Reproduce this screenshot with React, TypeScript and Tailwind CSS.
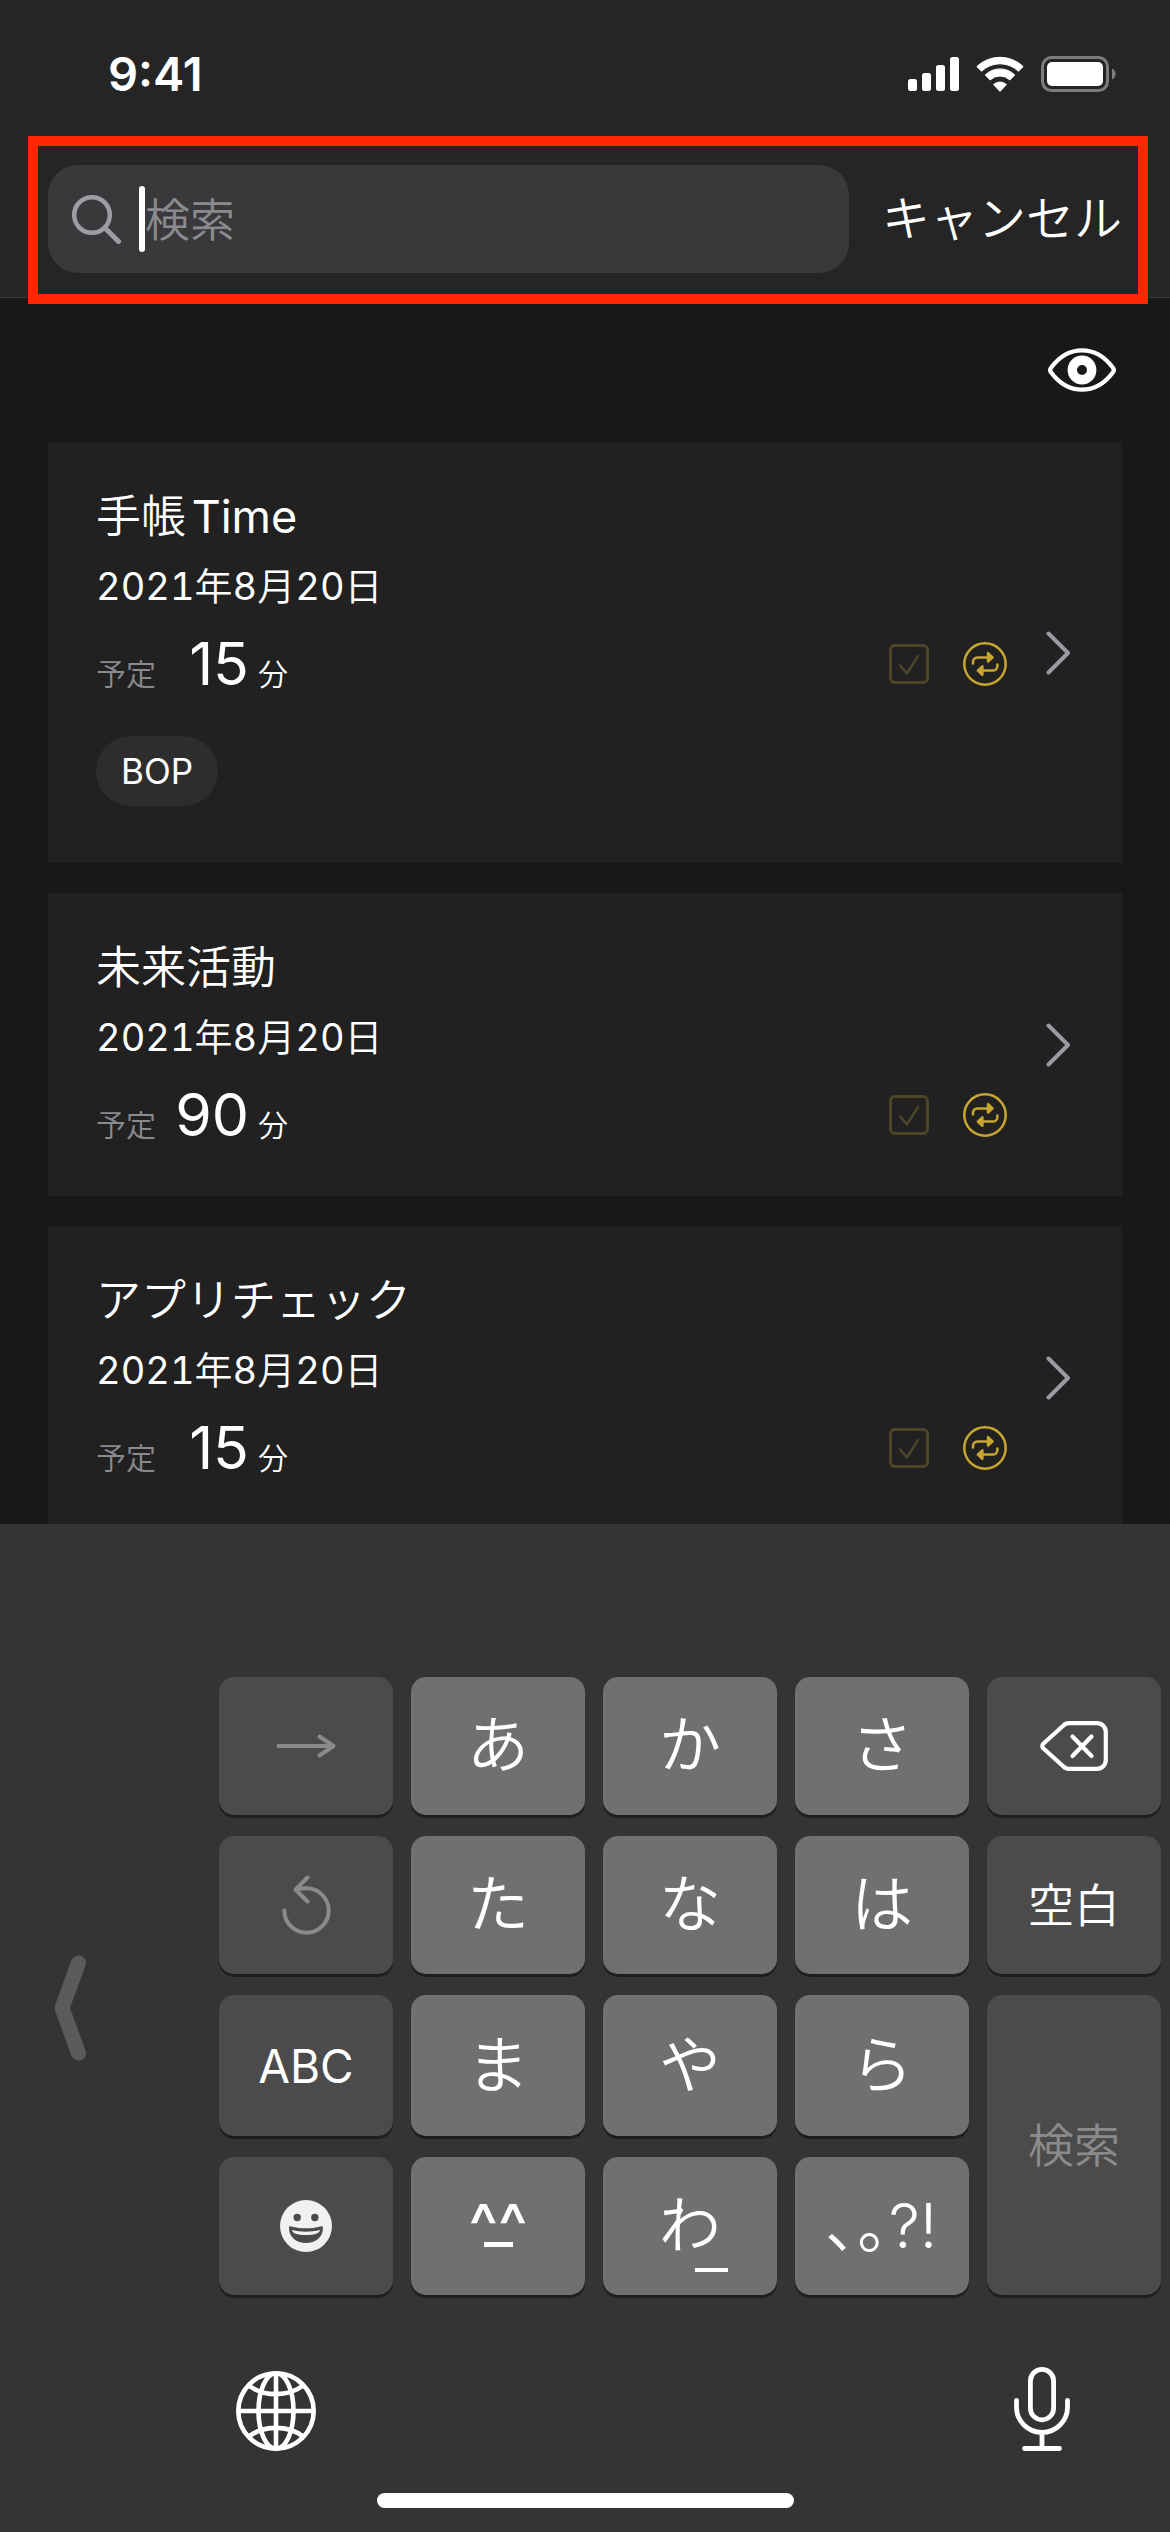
import { useState, type FC, type ReactNode } from 'react';
import clsx from 'clsx';

interface Task {
  id: number;
  title: string;
  date: string;
  minutes: number;
  tags: string[];
}

const TASKS: Task[] = [
  { id: 1, title: '手帳Time', date: '2021年8月20日', minutes: 15, tags: ['BOP'] },
  { id: 2, title: '未来活動', date: '2021年8月20日', minutes: 90, tags: [] },
  { id: 3, title: 'アプリチェック', date: '2021年8月20日', minutes: 15, tags: [] },
];

// Kana and kanji are set a little lighter than the latin runs beside them
const MixedText: FC<{ text: string }> = ({ text }) => (
  <>
    {text.split(/([\x20-\x7e]+)/).filter(Boolean).map((run, i) =>
      /^[\x20-\x7e]/.test(run) ? <span key={i} className="font-normal">{run}</span> : run,
    )}
  </>
);

const StatusBar: FC = () => (
  <div className="flex h-[136px] items-start justify-between pt-[46px] pr-[54px] pl-[108px]">
    <span className="text-[47px] leading-[56px] font-semibold">9:41</span>
    <div className="flex h-[56px] items-center gap-[17px]">
      <svg width="51" height="34" viewBox="0 0 51 34" fill="currentColor">
        <rect x="0" y="22" width="9" height="12" rx="2.5" />
        <rect x="14" y="16" width="9" height="18" rx="2.5" />
        <rect x="28" y="8" width="9" height="26" rx="2.5" />
        <rect x="42" y="0" width="9" height="34" rx="2.5" />
      </svg>
      <svg width="48" height="36" viewBox="0 0 48 36" fill="currentColor" stroke="currentColor" strokeWidth="1" strokeLinejoin="round">
        <path d="M.8 10.6A33.5 33.5 0 0 1 47.2 10.6L42.4 15.2A26.5 26.5 0 0 0 5.6 15.2Z" />
        <path d="M9.2 19A21 21 0 0 1 38.8 19L33.8 24A14 14 0 0 0 14.2 24Z" />
        <path d="M24 35.4L17.5 28.6A9.4 9.4 0 0 1 30.5 28.6Z" />
      </svg>
      <svg width="75" height="36" viewBox="0 0 75 36">
        <rect x="1.5" y="1.5" width="65" height="33" rx="9" fill="none" stroke="#7c7c7c" strokeWidth="3" />
        <rect x="6" y="6" width="56" height="24" rx="5" fill="#fff" />
        <path d="M71 12.500a6 6 0 0 1 0 11z" fill="#7c7c7c" />
      </svg>
    </div>
  </div>
);

const SearchHeader: FC = () => {
  const [query, setQuery] = useState('');

  return (
    <header className="relative z-10 shrink-0 border-b border-[#3a3a3a] bg-[#252525]">
      <StatusBar />
      <form className="relative flex items-center gap-[33px] px-[48px] pt-[29px] pb-[24px]" onSubmit={(e) => e.preventDefault()}>
        <label className="flex h-[108px] min-w-0 flex-1 items-center rounded-[30px] bg-[#39393b] pr-6 pl-[24px]">
          <svg className="shrink-0 text-[#9d9da4]" width="49" height="49" viewBox="0 0 49 49" fill="none" stroke="currentColor" strokeWidth="4.5" strokeLinecap="round">
            <circle cx="20" cy="20" r="17.8" />
            <path d="M33 33l13.5 13.5" strokeWidth="5" />
          </svg>
          <span className="ml-[18px] h-[66px] w-[6px] shrink-0 rounded-full bg-white" />
          <input
            type="search"
            aria-label="検索"
            placeholder="検索"
            value={query}
            onChange={(e) => setQuery(e.target.value)}
            className="h-[66px] min-w-0 flex-1 bg-transparent pt-[4px] text-[45px] text-white caret-transparent outline-none placeholder:text-[#8b8b8f]"
          />
        </label>
        <button type="button" className="shrink-0 text-[48px] leading-[60px]">キャンセル</button>
        {/* highlight frame round the search row */}
        <div className="pointer-events-none absolute top-0 right-[22px] -bottom-[7px] left-[28px] border-[10px] border-[#ff2600]" />
      </form>
    </header>
  );
};

const RepeatIcon: FC = () => (
  <svg className="text-[#c9a62f]" width="44" height="44" viewBox="0 0 44 44" fill="none" stroke="currentColor" strokeWidth="2.5" strokeLinecap="round" strokeLinejoin="round">
    <circle cx="22" cy="22" r="20.7" />
    <path d="M10 21.5V20a4.6 4.6 0 0 1 4.6-4.6H25" />
    <path d="M25 11.2v8.4l4.6-4.2z" fill="currentColor" />
    <path d="M34.4 22.5V24a4.6 4.6 0 0 1-4.6 4.6H19.4" />
    <path d="M19.4 24.4v8.4l-4.6-4.2z" fill="currentColor" />
  </svg>
);

const TaskCard: FC<{ task: Task }> = ({ task }) => {
  const [done, setDone] = useState(false);

  return (
    <li className="flex items-center bg-[#212121] pr-[52px] pl-[48px]">
      <div className="min-w-0 flex-1 pt-[45px] pb-[45px]">
        <h2 className="text-[45px] leading-[60px] [text-autospace:normal]">
          <MixedText text={task.title} />
        </h2>
        <p className="mt-[12px] text-[38px] leading-[54px] tabular-nums">
          <MixedText text={task.date} />
        </p>
        <div className="mt-[15px] flex h-[72px] items-center justify-between">
          <p className="flex items-baseline text-[30px] leading-none">
            <span className="text-[#8b8b8f]">予定</span>
            <span className="w-[93px] text-right text-[59px] leading-[70px] font-normal">{task.minutes}</span>
            <span className="ml-[9px]">分</span>
          </p>
          <div className="flex items-center gap-[34px]">
            <label className="relative block size-[40px] text-[#4d4528]">
              <input
                type="checkbox"
                aria-label={task.title}
                checked={done}
                onChange={(e) => setDone(e.target.checked)}
                className="block size-[40px] appearance-none rounded-[6px] border-[3px] border-current"
              />
              <svg className="pointer-events-none absolute inset-0" width="40" height="40" viewBox="0 0 40 40" fill="none" stroke="currentColor" strokeWidth="2.5" strokeLinecap="round" strokeLinejoin="round">
                <path d="M11 21.5l7 7.8L29 12" />
              </svg>
            </label>
            <RepeatIcon />
          </div>
        </div>
        {task.tags.length > 0 && (
          <ul className="mt-[36px] mb-[12px] flex gap-3">
            {task.tags.map((tag) => (
              <li key={tag} className="rounded-full bg-[#2d2d2d] px-[25px] text-[35px] leading-[70px] font-normal">
                {tag}
              </li>
            ))}
          </ul>
        )}
      </div>
      <svg className="ml-[39px] shrink-0 text-[#9a9aa0]" width="24" height="44" viewBox="0 0 24 44" fill="none" stroke="currentColor" strokeWidth="4" strokeLinecap="round" strokeLinejoin="round">
        <path d="M2.5 2.5L22 22 2.5 41.5" />
      </svg>
    </li>
  );
};

interface KeyProps {
  children: ReactNode;
  dark?: boolean;
  tall?: boolean;
  disabled?: boolean;
  label?: string;
}

const Key: FC<KeyProps> = ({ children, dark, tall, disabled, label }) => (
  <button
    type="button"
    aria-label={label}
    disabled={disabled}
    className={clsx(
      'flex items-center justify-center rounded-[15px] shadow-[0_3px_0_#1e1e1e]',
      dark ? 'bg-[#4b4b4b] text-[46px]' : 'bg-[#707070] text-[62px]',
      disabled && 'text-[#8b8b8b]',
      tall && 'row-span-2',
    )}
  >
    {children}
  </button>
);

const Keyboard: FC = () => (
  <section className="shrink-0 bg-[#343434] pt-[153px] pb-[24px]">
    <div className="grid grid-cols-[201px_repeat(5,minmax(0,1fr))] grid-rows-[138px_138px_141px_138px] gap-x-[18px] gap-y-[21px] pr-[9px] leading-none">
      <button type="button" aria-label="キーボードを左へ" className="row-span-4 flex items-center pt-[44px] pl-[54px]">
        <svg width="32" height="106" viewBox="0 0 32 106" fill="none" stroke="#5b5b5b" strokeWidth="15" strokeLinecap="round" strokeLinejoin="round">
          <path d="M24.5 8L8 53l16.5 45" />
        </svg>
      </button>

      <Key dark disabled label="次候補">
        <svg width="60" height="24" viewBox="0 0 60 24" fill="none" stroke="currentColor" strokeWidth="4" strokeLinecap="round" strokeLinejoin="round">
          <path d="M2.5 12H57M43.5 2.5L57.5 12l-14 9.5" />
        </svg>
      </Key>
      <Key>あ</Key>
      <Key>か</Key>
      <Key>さ</Key>
      <Key dark label="削除">
        <svg width="68" height="50" viewBox="0 0 68 50" fill="none" stroke="currentColor" strokeWidth="4.2" strokeLinecap="round" strokeLinejoin="round">
          <path d="M29 2.2H57a8.8 8.8 0 0 1 8.8 8.8V39a8.8 8.8 0 0 1-8.8 8.8H29a8 8 0 0 1-5.8-2.5L3.2 27.2a3.2 3.2 0 0 1 0-4.4L23.2 4.7A8 8 0 0 1 29 2.2Z" />
          <path d="M32.5 15.5l19 19.5M51.5 15.5l-19 19.5" />
        </svg>
      </Key>

      <Key dark disabled label="取り消す">
        <svg width="49" height="60" viewBox="0 0 49 60" fill="none" stroke="currentColor" strokeWidth="4" strokeLinecap="round" strokeLinejoin="round">
          <path d="M2.3 35.5A22.2 22.2 0 1 0 24.5 13.3Q19 13.3 14 14.5" />
          <path d="M25.5 2.5L13.5 14.5l12 12" />
        </svg>
      </Key>
      <Key>た</Key>
      <Key>な</Key>
      <Key>は</Key>
      <Key dark>空白</Key>

      <Key dark>
        <MixedText text="ABC" />
      </Key>
      <Key>ま</Key>
      <Key>や</Key>
      <Key>ら</Key>
      <Key dark tall disabled>検索</Key>

      <Key dark label="絵文字">
        <svg width="52" height="52" viewBox="0 0 52 52">
          <circle cx="26" cy="26" r="26" fill="#f1f1f1" />
          <circle cx="17.2" cy="17.5" r="3.7" fill="#4b4b4b" />
          <circle cx="34.8" cy="17.5" r="3.7" fill="#4b4b4b" />
          <path d="M9 28c0-1.500 1-2 2.500-1.600 9.500 2.600 19.500 2.600 29 0C42 26 43 26.500 43 28c0 9-7.500 15-17 15S9 37 9 28Z" fill="#4b4b4b" />
          <path d="M12 30c9.300 2.200 18.700 2.200 28 0-.500 3.500-5 5-14 5s-13.500-1.500-14-5Z" fill="#f1f1f1" />
        </svg>
      </Key>
      <Key label="^_^">
        <span className="relative text-[62px] font-medium">
          ^^
          <span className="absolute inset-x-0 top-[47px] mx-auto h-[5px] w-[29px] bg-white" />
        </span>
      </Key>
      <Key label="わ_">
        <span className="relative">
          わ
          <span className="absolute top-[73px] left-[36px] h-[4px] w-[33px] bg-white" />
        </span>
      </Key>
      <Key>､｡?!</Key>
    </div>

    <div className="flex items-end justify-between pt-[72px] pr-[100px] pl-[236px]">
      <button type="button" aria-label="次のキーボード">
        <svg width="80" height="80" viewBox="0 0 80 80" fill="none" stroke="currentColor" strokeWidth="4.6">
          <circle cx="40" cy="40" r="37.7" />
          <ellipse cx="40" cy="40" rx="17.5" ry="37.7" />
          <path d="M40 2v76M2 40h76M13 14.500c14.500 11.500 39.500 11.500 54 0M13 65.500c14.500-11.500 39.500-11.500 54 0" />
        </svg>
      </button>
      <button type="button" aria-label="音声入力">
        <svg width="56" height="84" viewBox="0 0 56 84" fill="none" stroke="currentColor" strokeWidth="4.8" strokeLinecap="round">
          <rect x="16.4" y="2.4" width="23.2" height="50.4" rx="11.6" />
          <path d="M2.5 33.5V40a25.5 25.5 0 0 0 51 0v-6.5M28 66v15M10.5 81.5h35" />
        </svg>
      </button>
    </div>
    <div className="mx-auto mt-[42px] h-[15px] w-[417px] rounded-full bg-white" />
  </section>
);

const App: FC = () => (
  <div className="flex h-screen flex-col overflow-hidden bg-[#181818] font-[Inter,'Noto_Sans_CJK_JP',sans-serif] font-[350] text-white" lang="ja">
    <SearchHeader />
    <main className="min-h-0 flex-1 overflow-hidden px-[48px]">
      <div className="flex h-[144px] items-center justify-end pr-[6px]">
        <button type="button" aria-label="表示切替">
          <svg width="68" height="44" viewBox="0 0 68 44" fill="none" stroke="currentColor" strokeWidth="4.3" strokeLinejoin="round">
            <path d="M3.2 19.5C11 9 22 2.3 34 2.3S57 9 64.8 19.5a4 4 0 0 1 0 5C57 35 46 41.7 34 41.7S11 35 3.2 24.5a4 4 0 0 1 0-5Z" />
            <circle cx="34" cy="22" r="9.7" strokeWidth="9.4" />
          </svg>
        </button>
      </div>
      <ul className="flex flex-col gap-[30px]">
        {TASKS.map((task) => (
          <TaskCard key={task.id} task={task} />
        ))}
      </ul>
    </main>
    <Keyboard />
  </div>
);

export default App;
